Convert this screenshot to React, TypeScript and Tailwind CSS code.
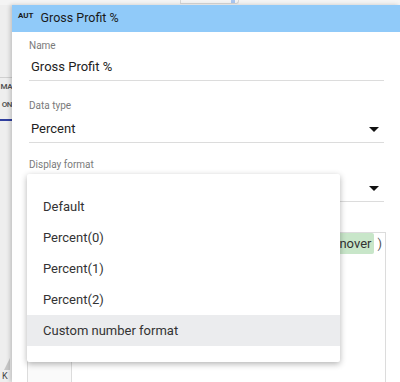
import React from 'react';

const formats = ['Default', 'Percent(0)', 'Percent(1)', 'Percent(2)', 'Custom number format'];

function Caret() {
  return (
    <svg width="10" height="5" viewBox="0 0 10 5" className="shrink-0">
      <path d="M0 0 L10 0 L5 5 Z" fill="#111" />
    </svg>
  );
}

export default function App() {
  const selected = 'Custom number format';

  return (
    <div className="w-[400px] h-[382px] overflow-hidden bg-[#f1f1f1] flex flex-col font-['Roboto',sans-serif] text-[#222]">
      {/* top toolbar remnant */}
      <div className="h-[5px] shrink-0 flex bg-[#f4f4f4]">
        <div className="ml-[180px] w-[59px] h-[4px] border-l border-b border-r border-[#d6d6d6] rounded-br-[3px] flex justify-end">
          <div className="w-[4px] h-[3px] mr-[3px] bg-[#a9c6f0]" />
        </div>
      </div>

      <div className="flex flex-1 min-h-0">
        {/* left strip of the page behind */}
        <div className="w-[12px] shrink-0 flex flex-col overflow-hidden bg-[#eeeeee]">
          <div className="mt-[72px] border-t border-[#d0d0d0] flex flex-col items-end">
            <span className="text-[8px] leading-[18px] font-semibold text-[#555] whitespace-nowrap tracking-[-0.5px]">MA</span>
            <span className="text-[8px] leading-[18px] font-semibold text-[#555] whitespace-nowrap tracking-[-0.5px]">ON</span>
          </div>
          <div className="mt-[5px] h-[2px] bg-[#303f9f]" />
          <div className="flex-1" />
          <div className="flex justify-end pr-[2px]">
            <svg width="6" height="12" viewBox="0 0 6 12">
              <path d="M6 0 L6 12 L0 12 Z" fill="#c7c7c7" />
            </svg>
          </div>
          <span className="text-[9px] leading-[12px] pl-[2px] text-[#444]">K</span>
        </div>

        {/* edit panel */}
        <div className="flex-1 relative bg-white shadow-[-2px_0_4px_rgba(0,0,0,0.18)] flex flex-col">
          <div className="h-[27px] shrink-0 bg-[#90caf9] flex items-center">
            <span className="ml-[6px] self-start mt-[5px] text-[8px] font-bold text-[#1a1a1a]">AUT</span>
            <span className="ml-[7px] text-[12.5px] text-[#1a1a1a]">Gross Profit %</span>
          </div>

          <div className="pl-[17px] pr-[16px] flex flex-col">
            <span className="mt-[8px] text-[10px] leading-[12px] text-[#7a7a7a]">Name</span>
            <div className="h-[29px] pt-[2px] flex items-center border-b border-[#dcdcdc] text-[13px] pl-[2px]">
              Gross Profit %
            </div>

            <span className="mt-[19px] text-[10px] leading-[12px] text-[#7a7a7a]">Data type</span>
            <div className="h-[31px] pt-[4px] flex items-center justify-between border-b border-[#dcdcdc] text-[13px] pl-[2px] pr-[5px]">
              <span>Percent</span>
              <Caret />
            </div>

            <span className="mt-[16px] text-[10px] leading-[12px] text-[#7a7a7a]">Display format</span>
            <div className="h-[31px] pt-[4px] flex items-center justify-between border-b border-[#dcdcdc] text-[13px] pl-[2px] pr-[5px]">
              <span>Percent</span>
              <Caret />
            </div>
          </div>

          {/* formula editor */}
          <div className="mt-[30px] ml-[15px] mr-[14px] flex-1 flex border border-b-0 border-[#dcdcdc]">
            <div className="w-[44px] shrink-0 border-r border-[#dcdcdc] bg-[#fafafa]" />
            <div className="flex-1 flex justify-end items-start pr-[3px] text-[13px] text-[#333]">
              <span className="h-[21px] px-[3px] flex items-center bg-[#c8e6c9] rounded-[2px]">Turnover</span>
              <span className="ml-[3px] leading-[21px] text-[#555]">)</span>
            </div>
          </div>

          {/* open select menu */}
          <div className="absolute left-[15px] top-[169px] w-[313px] bg-white rounded-[2px] shadow-[0_2px_6px_rgba(0,0,0,0.3)] pt-[17px] pb-[16px]">
            {formats.map((f) => (
              <div
                key={f}
                className={`h-[31px] flex items-center pl-[16px] text-[13px] text-[#333] ${f === selected ? 'bg-[#ebecee]' : ''}`}
              >
                {f}
              </div>
            ))}
          </div>
        </div>
      </div>
    </div>
  );
}
